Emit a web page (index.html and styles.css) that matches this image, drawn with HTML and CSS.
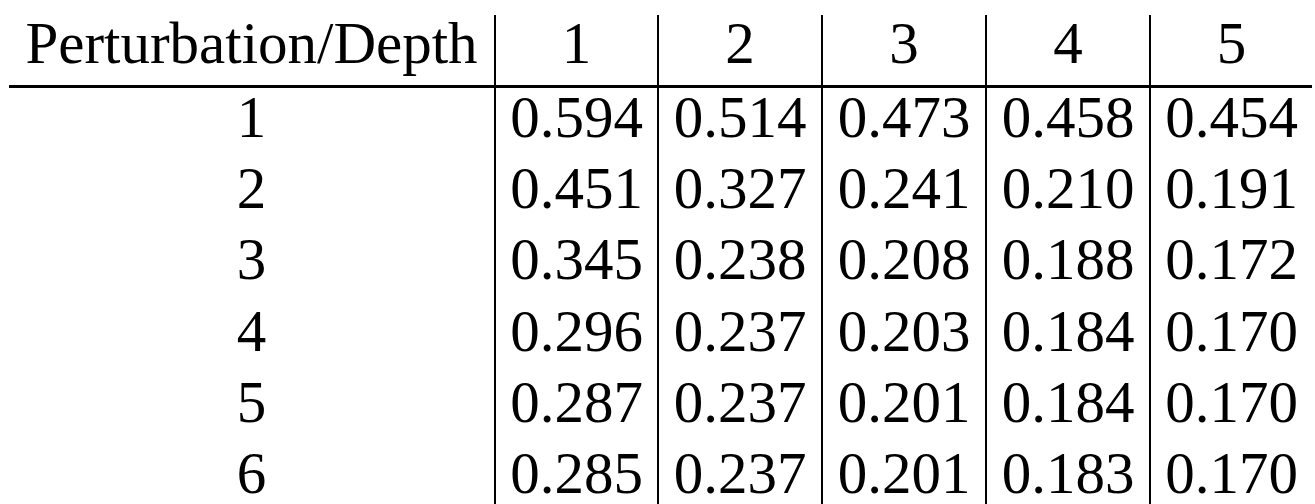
FILE: index.html
```html
<!DOCTYPE html>
<html lang="en">
<head>
  <meta charset="UTF-8" />
  <meta name="viewport" content="width=device-width, initial-scale=1.0"/>
  <title>Perturbation / Depth results</title>
  <link rel="stylesheet" href="styles.css">
</head>
<body>
  <div class="results">
    <div class="row head">
      <div class="cell">Perturbation/Depth</div>
      <div class="cell">1</div>
      <div class="cell">2</div>
      <div class="cell">3</div>
      <div class="cell">4</div>
      <div class="cell">5</div>
    </div>
    <div class="row">
      <div class="cell">1</div>
      <div class="cell">0.594</div>
      <div class="cell">0.514</div>
      <div class="cell">0.473</div>
      <div class="cell">0.458</div>
      <div class="cell">0.454</div>
    </div>
    <div class="row">
      <div class="cell">2</div>
      <div class="cell">0.451</div>
      <div class="cell">0.327</div>
      <div class="cell">0.241</div>
      <div class="cell">0.210</div>
      <div class="cell">0.191</div>
    </div>
    <div class="row">
      <div class="cell">3</div>
      <div class="cell">0.345</div>
      <div class="cell">0.238</div>
      <div class="cell">0.208</div>
      <div class="cell">0.188</div>
      <div class="cell">0.172</div>
    </div>
    <div class="row">
      <div class="cell">4</div>
      <div class="cell">0.296</div>
      <div class="cell">0.237</div>
      <div class="cell">0.203</div>
      <div class="cell">0.184</div>
      <div class="cell">0.170</div>
    </div>
    <div class="row">
      <div class="cell">5</div>
      <div class="cell">0.287</div>
      <div class="cell">0.237</div>
      <div class="cell">0.201</div>
      <div class="cell">0.184</div>
      <div class="cell">0.170</div>
    </div>
    <div class="row">
      <div class="cell">6</div>
      <div class="cell">0.285</div>
      <div class="cell">0.237</div>
      <div class="cell">0.201</div>
      <div class="cell">0.183</div>
      <div class="cell">0.170</div>
    </div>
  </div>
</body>
</html>
```

FILE: styles.css
```css
* { box-sizing: border-box; margin: 0; padding: 0; }
html, body { overflow: hidden; }
body {
  background: #fff; color: #000;
  font-family: 'Liberation Serif', 'Times New Roman', serif;
  font-size: 59px;
}
.results {
  margin: 15px 0 0 9px;
  width: 1303px;
}
.row {
  display: grid;
  grid-template-columns: 485px 163px 164px 164px 164px 163px;
  height: 71.2px;
}
.cell {
  text-align: center;
  line-height: 58px;
  white-space: nowrap;
}
.cell + .cell {
  border-left: 2px solid #000;
}
.head {
  height: 73px;
}
.head .cell {
  line-height: 56px;
  border-bottom: 3px solid #000;
}
```
